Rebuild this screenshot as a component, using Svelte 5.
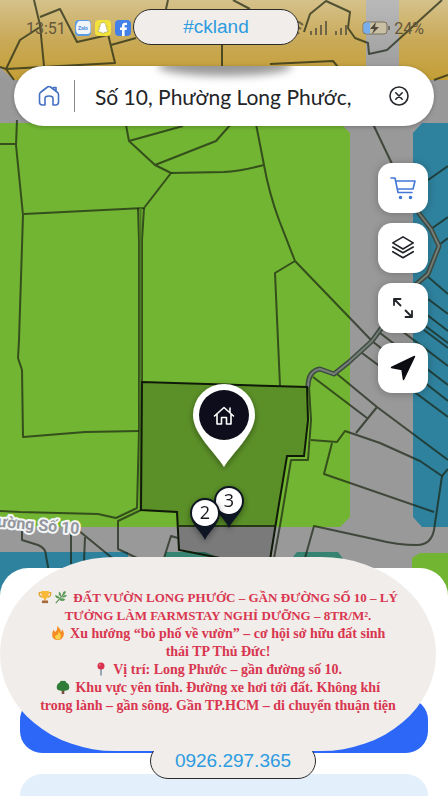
<script lang="ts">
  let address = $state('Số 10, Phường Long Phước,');

  const parcels = [
    'M34 0L40 25L44 66M40 17L60 9L77 42L108 35M6 69L20 40L40 27M0 67L6 69L115 63L108 34M111 45L136 38M6 69L14 80',
    'M233 0L250 9M304 32L310 14L326 1L350 12L348 28L355 38L368 43L369 54L387 50L442 0',
    'M222 44V66M270 64L333 61L338 67M168 0L166 9M434 80L448 75',
    'M17 120L16 145L23 215L19 340L18 358L22 370L23 437L85 432L139 431M0 144H16',
    'M24 214L144 208L171 173L155 165L129 141L126 125M129 141L183 126M155 165L216 141L231 124',
    'M171 173L224 172Q240 171 264 165M256 124L264 165Q269 193 279 220L295 261L372 341M295 261L275 273L280 386',
    'M138 208L139 240V431L137 508L116 518L98 514L20 512L0 511M144 208L142 240V382M141 510L118 521V549L137 558',
    'M373 124L393 166M428 180L448 166M431 229L448 217M439 245L448 238',
    'M427 276L448 294M428 299L448 314M426 314L448 331M424 330L448 348M390 322L448 366M380 333L448 385M362 353L448 417',
    'M404 310L448 343M372 341L448 401',
    'M337 374L377 407L448 460M313 377L367 418M377 407L356 433',
    'M311 440L337 442L345 431L380 443L420 461L442 476L448 469M332 443L324 474L434 512',
    'M442 476L434 530Q431 545 417 545Q397 545 378 540L314 526L305 558',
    'M22 530V540L38 545Q46 548 46 556L49 572M71 532V564M85 537L84 562M78 530L117 562M164 558L171 536L178 538',
    'M309 387L311 420L308 460H291L281 520L274 558'
  ];

  const road = 'M418 212L431 229L439 246L428 274L412 288L380 330L372 341L349 362L334 374L320 369Q308 371 308 387';
  const plot = 'M142 382L307 387L308 420L304 456H287L278 510L270 560L220 558L179 550L177 512L141 510Z';

  const markers = [
    { label: '3', x: 229, y: 501 },
    { label: '2', x: 205, y: 513 }
  ];
</script>

<main class="screen">
  <svg class="map" viewBox="0 0 448 796" preserveAspectRatio="xMidYMin slice" role="img" aria-label="Bản đồ">
    <defs>
      <linearGradient id="sand" x1="0" y1="0" x2="0" y2="1">
        <stop offset="0" stop-color="#d5c18b" />
        <stop offset="0.5" stop-color="#c9aa58" />
        <stop offset="1" stop-color="#c49e35" />
      </linearGradient>
      <linearGradient id="haze" x1="0" y1="0" x2="0" y2="1">
        <stop offset="0" stop-color="#b9b9b9" />
        <stop offset="1" stop-color="#999" />
      </linearGradient>
      <filter id="soft" x="-30%" y="-30%" width="160%" height="170%">
        <feDropShadow dx="0" dy="2" stdDeviation="3" flood-opacity="0.4" />
      </filter>
    </defs>

    <rect width="448" height="796" fill="#999" />
    <rect width="448" height="80" fill="url(#haze)" />
    <path fill="url(#sand)" d="M0 0H366V80H14L0 67ZM399 0H448V80H399Z" />
    <path fill="#72b532" d="M0 123H340L350 133V517L340 527H0ZM412 558L420 553H448V600H412Z" />
    <path fill="#2f829e" d="M422 123H448V527H422L413 517V133ZM0 552H128V600H0Z" />
    <path fill="#368371" d="M166 552H205L220 558V570H160ZM292 558L297 552H338L344 560H292Z" />

    <g class="lines">
      {#each parcels as d}
        <path {d} />
      {/each}
    </g>
    <path d={road} fill="none" stroke="#3f4a40" stroke-width="5" stroke-linejoin="round" />
    <path d={road} fill="none" stroke="#737f78" stroke-width="2" stroke-linejoin="round" />
    <path d="M140.500 208V510" fill="none" stroke="#4b7a22" stroke-width="2" />
    <path d={plot} fill="#000" fill-opacity="0.2" stroke="#101a08" stroke-width="2" />
    <path d="M179 526H276" stroke="#151d0c" stroke-width="1.500" />

    <text class="street" x="79" y="534" text-anchor="end" transform="rotate(5 79 534)">ường Số 10</text>

    <g filter="url(#soft)">
      <path fill="#fff" d="M224 467C216 453 193 434 193 415A31 31 0 0 1 255 415C255 434 232 453 224 467Z" />
      <circle cx="224" cy="415" r="25" fill="#0a0e1a" />
      <path
        d="M214.500 416L224 407.500L233.500 416M217 414V424H221.500V417.500H226.500V424H231V414M230 412V408"
        fill="none"
        stroke="#fff"
        stroke-width="1.600"
        stroke-linecap="round"
        stroke-linejoin="round"
      />
    </g>

    {#each markers as m}
      <g transform="translate({m.x} {m.y})" filter="url(#soft)">
        <path fill="#0e1420" d="M0 27C-3 19 -15 11 -15 0A15 15 0 0 1 15 0C15 11 3 19 0 27Z" />
        <circle r="13" fill="#fff" />
        <text class="marker" y="6" text-anchor="middle">{m.label}</text>
      </g>
    {/each}
  </svg>

  <header class="status">
    <div class="group">
      <time>13:51</time>
      <div class="apps">
        <svg width="16" height="16" viewBox="0 0 16 16">
          <rect width="16" height="16" rx="4" fill="#5b9ae6" />
          <path d="M4 1H14Q15.500 2 15.500 4V11Q15.500 14 12 14H4Q1 14 1 8Q1 3 4 1Z" fill="#f2f5f7" />
          <text x="8" y="9.500" font-size="5" font-weight="700" text-anchor="middle" fill="#4d8de0">Zalo</text>
        </svg>
        <svg width="16" height="16" viewBox="0 0 16 16">
          <rect width="16" height="16" rx="4" fill="#f2e33c" />
          <path
            d="M8 2.500C10 2.500 11 4 11 6V7L12.500 7.500L11.300 8.500C11.700 9.800 12.500 10.500 13.500 11L11.500 12L10 12.200L8 13.500L6 12.200L4.500 12L2.500 11C3.500 10.500 4.300 9.800 4.700 8.500L3.500 7.500L5 7V6C5 4 6 2.500 8 2.500Z"
            fill="#fff"
            stroke="#8f8a50"
            stroke-width="0.500"
          />
        </svg>
        <svg width="16" height="16" viewBox="0 0 16 16">
          <rect width="16" height="16" rx="4" fill="#4381e8" />
          <path d="M7 16V10H5V7.500H7V6C7 3.800 8.200 2.700 10.200 2.700H12V5H10.800C9.900 5 9.600 5.400 9.600 6.200V7.500H12L11.600 10H9.600V16Z" fill="#fff" />
        </svg>
      </div>
    </div>

    <strong class="tag">#ckland</strong>

    <div class="group right">
      <svg width="64" height="16" viewBox="0 0 64 16" fill="none" stroke="#6f6348" stroke-width="2">
        <path d="M0 2Q5 1 9 5M0 7Q4 6 7 9M0 12Q3 11 5 14" />
        <path d="M17 15V11M22 15V8M27 15V5M32 15V1" />
        <path d="M42 15V11M47 15V8M52 15V5" />
      </svg>
      <svg width="28" height="14" viewBox="0 0 28 14">
        <rect x="1" y="1" width="24" height="12" rx="3" fill="#c8bfa4" stroke="#77705e" />
        <path d="M4 1.500H8V12.500H4Q1.500 12.500 1.500 10V4Q1.500 1.500 4 1.500Z" fill="#77aef0" />
        <path d="M14 1L8 8H12L10 13L17 6H13Z" fill="#4f493d" />
        <path d="M27 5V9" stroke="#77705e" stroke-width="2" />
      </svg>
      <span>24%</span>
    </div>
  </header>

  <form class="search">
    <svg class="home" width="22" height="22" viewBox="0 0 22 22" fill="none" stroke="#4470c4" stroke-width="1.600" stroke-linejoin="round" stroke-linecap="round">
      <path d="M1.500 9.500Q1.500 8 3 7L9.500 2Q11 1 12.500 2L19 7Q20.500 8 20.500 9.500V17Q20.500 20 17.500 20H15V13.500Q15 11 11 11Q7 11 7 13.500V20H4.500Q1.500 20 1.500 17ZM15.500 4V2.500H18V6" />
    </svg>
    <input type="text" aria-label="Địa chỉ" bind:value={address} />
    <button type="button" class="clear" aria-label="Xóa" onclick={() => (address = '')}>
      <svg width="20" height="20" viewBox="0 0 20 20" fill="none" stroke="#25282c" stroke-width="1.600" stroke-linecap="round">
        <circle cx="10" cy="10" r="9" />
        <path d="M6.800 6.800L13.200 13.200M13.200 6.800L6.800 13.200" />
      </svg>
    </button>
  </form>

  <nav class="tools">
    <button type="button" aria-label="Giỏ hàng">
      <svg width="26" height="26" viewBox="0 0 26 26" fill="none" stroke="#4377d6" stroke-width="1.600" stroke-linecap="round" stroke-linejoin="round">
        <path d="M1 3H5L8 17.500H22M6 6H25L23 14H7.500" />
        <circle cx="10.500" cy="22.500" r="1" fill="#4377d6" />
        <circle cx="20.500" cy="22.500" r="1" fill="#4377d6" />
      </svg>
    </button>
    <button type="button" aria-label="Lớp bản đồ">
      <svg width="26" height="26" viewBox="0 0 28 28" fill="none" stroke="#202328" stroke-width="1.800" stroke-linejoin="round" stroke-linecap="round">
        <path d="M14 2L25 8.500L14 15L3 8.500ZM3 13L14 19L25 13M3 18L14 24.500L25 18" />
      </svg>
    </button>
    <button type="button" aria-label="Mở rộng">
      <svg width="28" height="28" viewBox="0 0 28 28" fill="none" stroke="#202328" stroke-width="1.800" stroke-linecap="round" stroke-linejoin="round">
        <path d="M11.500 11.500L5 5M5 11V5H11.500M16.500 16.500L23 23M23 17V23H16.500" />
      </svg>
    </button>
    <button type="button" aria-label="Vị trí của tôi">
      <svg width="28" height="28" viewBox="0 0 28 28" fill="#0b0d12" stroke="#0b0d12" stroke-width="1.500" stroke-linejoin="round">
        <path d="M25.500 2.500L14.500 25.500L13 15.500L2.500 13.500Z" />
      </svg>
    </button>
  </nav>

  <section class="sheet">
    <button type="button" class="primary" aria-label="Liên hệ"></button>
    <div class="panel"></div>

    <div class="promo">
      <article class="bubble">
        <h1>
          <svg class="emoji" viewBox="0 0 16 16">
            <path d="M4 3H1.500Q1 8 5 8M12 3H14.500Q15 8 11 8" fill="none" stroke="#e0a52e" stroke-width="1.500" />
            <path d="M3.500 1H12.500Q12.500 9 9 10V12H7V10Q3.500 9 3.500 1Z" fill="#f8b938" />
            <path d="M4.500 12H11.500V15H4.500Z" fill="#a9683c" />
          </svg><svg class="emoji" viewBox="0 0 16 16" fill="#5c9a58">
            <path d="M2 15Q7 10 13 2" fill="none" stroke="#4b8746" stroke-width="1.200" />
            <path d="M13 1Q9 2 10 6Q14 5 13 1ZM6 2Q4 5 8 8Q9 4 6 2ZM1 6Q2 10 7 10Q6 6 1 6ZM15 6Q11 5 9 8Q12 10 15 6ZM13 11Q9 8 6 11Q9 14 13 11Z" />
          </svg>
          ĐẤT VƯỜN LONG PHƯỚC – GẦN ĐƯỜNG SỐ 10 – LÝ<br />
          TƯỞNG LÀM FARMSTAY NGHỈ DƯỠNG – 8TR/M².
        </h1>
        <p>
          <svg class="emoji" viewBox="0 0 16 16">
            <path d="M7 0Q12 4 11 7Q13 6 12.500 3.500Q16 8 14 12Q12 16 8 16Q3 16 1.500 12Q.500 8 3 4Q4 7 5.500 6.500Q8 4 7 0Z" fill="#f58b23" />
            <path d="M8.500 6Q12 10 11 13Q10 15.500 8 15.500Q5 15.500 4.500 12.500Q5 11 6 10Q7 11 7.500 10Q9 8 8.500 6Z" fill="#fdd24c" />
          </svg>
          Xu hướng “bỏ phố về vườn” – cơ hội sở hữu đất sinh<br />
          thái TP Thủ Đức!
        </p>
        <p>
          <svg class="emoji" viewBox="0 0 16 16">
            <path d="M8 7V15.500" stroke="#8193a5" stroke-width="1.800" />
            <circle cx="8" cy="4.500" r="4" fill="#d9304c" />
            <circle cx="6.700" cy="3.200" r="1" fill="#ee7b8b" />
          </svg>
          Vị trí: Long Phước – gần đường số 10.
        </p>
        <p>
          <svg class="emoji" viewBox="0 0 16 16">
            <path d="M6.500 9H9.500V16H6.500Z" fill="#74503d" />
            <path d="M8 1Q11 0 12 3Q15 4 15 7Q16 11 12 12Q8 13 4 12Q0 11 1 7Q1 4 4 3Q5 0 8 1Z" fill="#2f7d38" />
          </svg>
          Khu vực yên tĩnh. Đường xe hơi tới đất. Không khí<br />
          trong lành – gần sông. Gần TP.HCM – di chuyển thuận tiện
        </p>
      </article>
      <a class="phone" href="tel:0926297365">0926.297.365</a>
    </div>
  </section>
</main>

<style>
  :global(body) {
    margin: 0;
  }

  .screen {
    position: relative;
    display: flex;
    flex-direction: column;
    min-height: 100vh;
    overflow: hidden;
    font-family: 'Lato', 'Liberation Sans', sans-serif;
  }

  .map {
    position: absolute;
    inset: 0;
    width: 100%;
    height: 100%;
  }

  .lines {
    fill: none;
    stroke: #1a2412;
    stroke-opacity: 0.7;
    stroke-width: 2;
    stroke-linejoin: round;
  }

  .street {
    font: 700 16px 'Roboto', sans-serif;
    fill: #92969c;
    stroke: #f4f5f6;
    stroke-width: 4px;
    stroke-linejoin: round;
    paint-order: stroke;
  }

  .marker {
    font: 400 18px 'Open Sans', sans-serif;
    fill: #16181c;
  }

  .status {
    position: relative;
    display: flex;
    align-items: center;
    justify-content: space-between;
    height: 56px;
    padding: 0 24px 0 26px;
    font-family: 'Roboto', sans-serif;
    font-size: 16px;
    color: #64573c;
  }

  .group {
    display: flex;
    align-items: center;
    gap: 9px;
  }

  .right {
    gap: 4px;
  }

  .apps {
    display: flex;
    gap: 4px;
  }

  .tag,
  .phone {
    box-sizing: border-box;
    width: 166px;
    height: 36px;
    border: 1px solid #2b2b2b;
    border-radius: 18px;
    background: #f0edea;
    color: #2d9be0;
    font-family: 'Liberation Sans', sans-serif;
    font-size: 19px;
    font-weight: 400;
    line-height: 34px;
    text-align: center;
    text-decoration: none;
  }

  .tag {
    position: absolute;
    top: 9px;
    left: calc(50% - 8px);
    transform: translateX(-50%);
  }

  .phone {
    margin: -8px 0 0 30px;
  }

  .search {
    position: relative;
    display: flex;
    align-items: center;
    height: 60px;
    margin: 10px 14px 0;
    padding: 0 25px 0 24px;
    box-sizing: border-box;
    border-radius: 30px;
    background: #fff;
    box-shadow: 0 1px 4px rgba(0, 0, 0, 0.25);
    overflow: hidden;
  }

  .search::before {
    content: '';
    position: absolute;
    top: -10px;
    left: 144px;
    width: 134px;
    height: 20px;
    border-radius: 50%;
    background: #999;
    filter: blur(4px);
  }

  .home {
    flex: none;
  }

  input {
    flex: 1;
    min-width: 0;
    height: 32px;
    margin-left: 14px;
    padding: 0 0 0 20px;
    border: 0;
    border-left: 1px solid #8b8b8b;
    outline: 0;
    background: transparent;
    color: #222428;
    font-family: inherit;
    font-size: 21px;
  }

  button {
    padding: 0;
    border: 0;
    cursor: pointer;
  }

  .clear {
    display: grid;
    background: transparent;
  }

  .tools {
    position: relative;
    display: flex;
    flex-direction: column;
    gap: 10px;
    align-self: flex-end;
    margin: 37px 20px 0 0;
  }

  .tools button {
    display: grid;
    place-items: center;
    width: 50px;
    height: 50px;
    border-radius: 14px;
    background: #fff;
    box-shadow: 0 1px 8px rgba(0, 0, 0, 0.25);
  }

  .sheet {
    position: relative;
    display: flex;
    flex-direction: column;
    gap: 21px;
    margin-top: auto;
    padding: 130px 20px 0;
    border-radius: 28px 28px 0 0;
    background: #fff;
  }

  .primary {
    height: 55px;
    border-radius: 22px;
    background: #2c67f8;
  }

  .panel {
    height: 22px;
    border-radius: 22px 22px 0 0;
    background: #e3effb;
  }

  .promo {
    position: absolute;
    top: -11px;
    left: 0;
    right: 12px;
    display: flex;
    flex-direction: column;
    align-items: center;
  }

  .bubble {
    position: relative;
    z-index: 1;
    box-sizing: border-box;
    width: 100%;
    padding: 32px 0 36px;
    border-radius: 115px / 97px;
    background: #f0edea;
    color: #d93650;
    font-family: 'Liberation Serif', serif;
    font-size: 14px;
    font-weight: 700;
    line-height: 18px;
    text-align: center;
    white-space: nowrap;
  }

  h1,
  p {
    margin: 0;
  }

  h1 {
    font-size: 13px;
  }

  .emoji {
    width: 14px;
    height: 14px;
    margin-right: 2px;
    vertical-align: -2px;
  }
</style>
